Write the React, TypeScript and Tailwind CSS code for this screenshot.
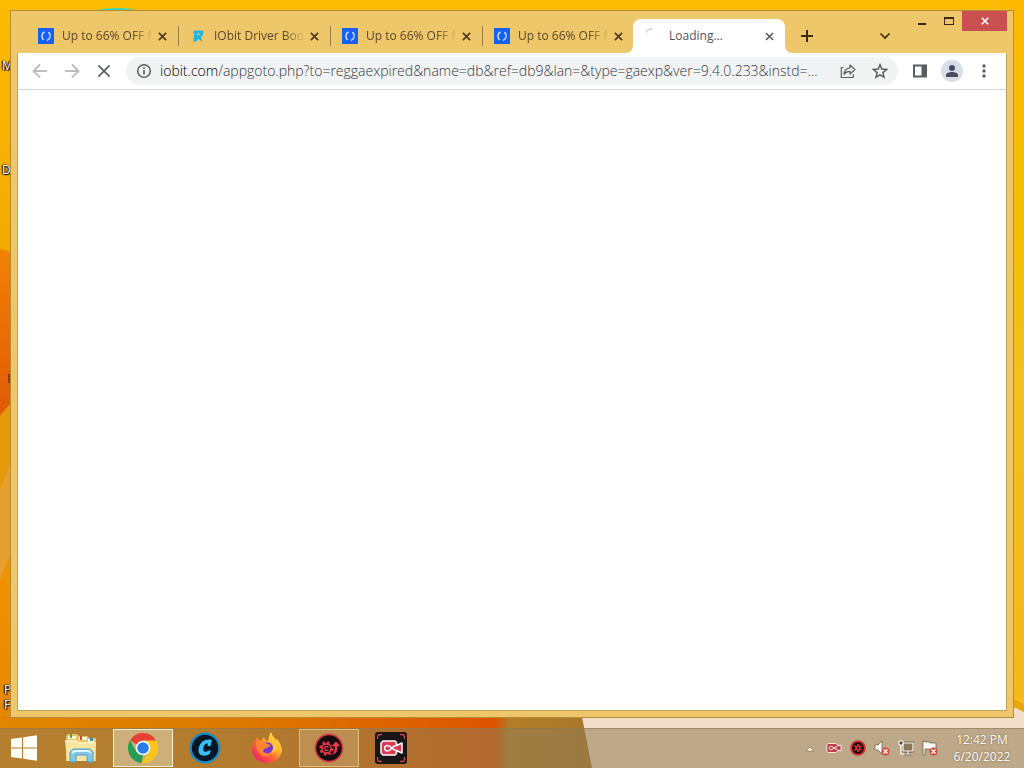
import React, { useState } from "react";

type TabData = { id: number; title: string; icon: "iobit" | "driver" };

const initialTabs: TabData[] = [
  { id: 1, title: "Up to 66% OFF f", icon: "iobit" },
  { id: 2, title: "IObit Driver Boo", icon: "driver" },
  { id: 3, title: "Up to 66% OFF f", icon: "iobit" },
  { id: 4, title: "Up to 66% OFF f", icon: "iobit" },
];

function Cross({ className }: { className: string }) {
  return (
    <svg viewBox="0 0 10 10" className={className} fill="none" stroke="currentColor" aria-hidden="true">
      <path d="M1 1l8 8M9 1l-8 8" />
    </svg>
  );
}

function Favicon({ kind }: { kind: TabData["icon"] }) {
  if (kind === "driver") {
    return (
      <svg viewBox="0 0 16 16" className="size-4 shrink-0" aria-hidden="true">
        <path d="M4 2.500h7.500c2 0 2.300 1.300 1.800 3-.5 1.900-1.200 2.600-2.300 3L12.300 14 8.500 11 6 13.500H3L4.500 5.500 3 4.500z" fill="#22b4e2" />
        <path d="M7.200 5.500h2.600l-.5 1.600H6.800z" fill="#efc76b" />
      </svg>
    );
  }
  return (
    <svg viewBox="0 0 16 16" className="size-4 shrink-0" aria-hidden="true">
      <path d="M0 0h16v16H0z" fill="#1660f5" />
      <path d="M6.500 3.800C3.500 5.500 3 9.500 5.500 12M9 12.500c3.300-1.500 4.300-5.500 1.500-8.500" fill="none" stroke="#d9f0ff" strokeWidth="1.400" />
    </svg>
  );
}

function Desktop() {
  return (
    <svg viewBox="0 0 1024 768" preserveAspectRatio="none" className="absolute inset-0 size-full" aria-hidden="true">
      <defs>
        <linearGradient id="sky" x1="0" y1="0" x2="0" y2="1">
          <stop offset="0" stopColor="#fdbb04" />
          <stop offset=".35" stopColor="#f3a800" />
          <stop offset=".8" stopColor="#ee9000" />
          <stop offset="1" stopColor="#e08400" />
        </linearGradient>
        <linearGradient id="rim" x1="0" y1="0" x2="0" y2="1">
          <stop offset="0" stopColor="#fcb900" />
          <stop offset=".3" stopColor="#f3c000" />
          <stop offset=".5" stopColor="#f2c022" />
          <stop offset="1" stopColor="#f5b51c" />
        </linearGradient>
        <linearGradient id="petal" x1="0" y1="0" x2="0" y2="1">
          <stop offset="0" stopColor="#f08205" />
          <stop offset="1" stopColor="#e05a05" />
        </linearGradient>
        <linearGradient id="floor" x1="0" y1="0" x2="1" y2="0">
          <stop offset="0" stopColor="#e08600" />
          <stop offset=".4" stopColor="#dc7a00" />
          <stop offset=".8" stopColor="#dd5800" />
          <stop offset=".835" stopColor="#dc5200" />
          <stop offset=".86" stopColor="#b27d28" />
          <stop offset="1" stopColor="#a8782c" />
        </linearGradient>
      </defs>
      <path d="M0 0h1024v768H0z" fill="url(#sky)" />
      <path d="M1000 0h24v768h-24z" fill="url(#rim)" />
      <path d="M0 249l12 3v150L0 416z" fill="url(#petal)" />
      <path d="M0 416l12-14v150L0 580z" fill="#e59a0c" />
      <path d="M0 490l12-30v90L0 580z" fill="#e7a030" />
      <path d="M8 374h3v9H8z" fill="#8e3c0c" />
      <path d="M0 717h592v51H0z" fill="url(#floor)" />
      <path d="M582 717h442v51H592z" fill="#f3dfc9" />
      <path d="M1012 706l12 6v20h-12z" fill="#f3dfc9" />
      <path d="M1012 699l12 5v8l-12-6z" fill="#eaa50c" />
      <ellipse cx="117" cy="11" rx="20" ry="3" fill="#43d4b0" />
    </svg>
  );
}

function DesktopLabels() {
  const labels = [
    { text: "M", pos: "left-0.5 top-[59px]" },
    { text: "D", pos: "left-0.5 top-[163px]" },
    { text: "P", pos: "left-1 top-[683px]" },
    { text: "F", pos: "left-1 top-[698px]" },
  ];
  return (
    <>
      {labels.map((l) => (
        <span key={l.text} className={`absolute text-xs leading-[14px] text-white [text-shadow:1px_1px_1px_#000,-1px_0_1px_#000,0_0_2px_#000] ${l.pos}`}>
          {l.text}
        </span>
      ))}
    </>
  );
}

function Tab({ tab, first, onClose }: { tab: TabData; first: boolean; onClose: () => void }) {
  return (
    <div className="flex h-[34px] w-38 min-w-0 items-center">
      {!first && <span className="h-5 w-px bg-[#9b7d42]" />}
      <button className={`flex min-w-0 flex-1 items-center gap-2 ${first ? "pl-3" : "pl-[11px]"}`}>
        <Favicon kind={tab.icon} />
        <span className="min-w-0 flex-1 overflow-hidden text-left whitespace-nowrap [mask-image:linear-gradient(to_right,#000_76%,transparent)]">
          {tab.title}
        </span>
      </button>
      <button aria-label={`Close ${tab.title}`} onClick={onClose} className="mr-2 flex size-4 shrink-0 items-center justify-center text-[#4b3414]">
        <Cross className="size-[9px] stroke-[1.8]" />
      </button>
    </div>
  );
}

function TabStrip() {
  const [tabs, setTabs] = useState(initialTabs);
  return (
    <div className="flex h-[42px] items-end text-xs text-[#5c4727]">
      <div className="flex min-w-0 pl-[9px]">
        {tabs.map((t, i) => (
          <Tab key={t.id} tab={t} first={i === 0} onClose={() => setTabs(tabs.filter((x) => x.id !== t.id))} />
        ))}
      </div>
      <svg viewBox="0 0 8 8" className="pointer-events-none -ml-[9px] size-2 shrink-0 text-white" aria-hidden="true">
        <path d="M8 0v8H0c5 0 8-3 8-8z" fill="currentColor" />
      </svg>
      <div className="flex h-[34px] w-38 shrink-0 items-center rounded-t-lg bg-white pr-2 pl-3 text-[#505358]">
        <svg viewBox="0 0 16 16" className="size-4 text-[#d3dbe5]" fill="none" stroke="currentColor" strokeWidth="2" aria-hidden="true">
          <path d="M1 4.500C2 2.500 4 1 7.500.8" />
        </svg>
        <button className="ml-2 flex-1 text-left">Loading...</button>
        <button aria-label="Close Loading" className="flex size-4 items-center justify-center">
          <Cross className="size-[9px] stroke-[1.6]" />
        </button>
      </div>
      <svg viewBox="0 0 8 8" className="size-2 shrink-0 text-white" aria-hidden="true">
        <path d="M0 0v8h8C3 8 0 5 0 0z" fill="currentColor" />
      </svg>
      <button aria-label="New tab" className="ml-1.5 flex h-[34px] w-4 shrink-0 items-center justify-center text-[#3c2a12]">
        <svg viewBox="0 0 12 12" className="size-3" stroke="currentColor" strokeWidth="2" aria-hidden="true">
          <path d="M6 0v12M0 6h12" />
        </svg>
      </button>
      <button aria-label="Search tabs" className="mr-[114px] ml-auto flex h-[34px] w-4 shrink-0 items-center justify-center text-[#3c2a12]">
        <svg viewBox="0 0 12 8" className="h-2 w-3" fill="none" stroke="currentColor" strokeWidth="1.700" aria-hidden="true">
          <path d="M1.500 1.500L6 6l4.500-4.500" />
        </svg>
      </button>
    </div>
  );
}

function WindowControls() {
  return (
    <div className="absolute top-0 right-1.5 flex text-[#3b2a14]">
      <button aria-label="Minimize" className="flex h-5 w-[27px] items-center justify-center">
        <svg viewBox="0 0 8 10" className="h-2.5 w-2" aria-hidden="true">
          <path d="M0 7h8v2H0z" fill="currentColor" />
        </svg>
      </button>
      <button aria-label="Maximize" className="flex h-5 w-[27px] items-center justify-center">
        <svg viewBox="0 0 10 8" className="h-2 w-2.5" aria-hidden="true">
          <path d="M0 0h10v8H0zM1 2v5h8V2z" fill="currentColor" fillRule="evenodd" />
        </svg>
      </button>
      <button aria-label="Close" className="flex h-5 w-[45px] items-center justify-center bg-[#c94f51] text-white">
        <Cross className="size-2 stroke-2" />
      </button>
    </div>
  );
}

function Toolbar() {
  return (
    <div className="flex h-[37px] items-center border-b border-[#d5d7d8] bg-white px-3.5 text-[#5a5e63]">
      <div className="flex shrink-0 gap-4">
        <button aria-label="Back" className="text-[#bbbdbf]">
          <svg viewBox="0 0 16 16" className="size-4" fill="none" stroke="currentColor" strokeWidth="1.800" aria-hidden="true">
            <path d="M8 1.500L1.500 8 8 14.500M1.500 8H15" />
          </svg>
        </button>
        <button aria-label="Forward" className="text-[#bbbdbf]">
          <svg viewBox="0 0 16 16" className="size-4" fill="none" stroke="currentColor" strokeWidth="1.800" aria-hidden="true">
            <path d="M8 1.500L14.500 8 8 14.500M14.500 8H1" />
          </svg>
        </button>
        <button aria-label="Stop" className="flex size-4 items-center justify-center">
          <Cross className="size-3.5 stroke-[1.2]" />
        </button>
      </div>
      <div className="ml-3.5 flex h-7 min-w-0 flex-1 items-center rounded-full bg-[#f1f3f4] px-2.5">
        <button aria-label="Site information">
          <svg viewBox="0 0 16 16" className="size-4" fill="none" stroke="currentColor" strokeWidth="1.500" aria-hidden="true">
            <circle cx="8" cy="8" r="6.300" />
            <path d="M8 7v4.500M8 4.300v1.600" strokeWidth="1.700" />
          </svg>
        </button>
        <a href="#page" className="ml-2 min-w-0 flex-1 text-sm leading-5 font-light whitespace-nowrap text-[#35393e]">
          <span className="text-black">iobit.com</span>/appgoto.php?to=reggaexpired&amp;name=db&amp;ref=db9&amp;lan=&amp;type=gaexp&amp;ver=9.4.0.233&amp;instd=...
        </a>
        <button aria-label="Share" className="ml-3">
          <svg viewBox="0 0 16 16" className="size-4" fill="none" stroke="currentColor" strokeWidth="1.200" strokeLinejoin="round" aria-hidden="true">
            <path d="M3.500 4.500H1.300v10h12V11M10 2l5 4.500L10 11V8.300c-3 0-4.500.7-6 3 .3-3.600 2.200-6 6-6.500z" />
          </svg>
        </button>
        <button aria-label="Bookmark" className="ml-4">
          <svg viewBox="0 0 16 16" className="size-4" fill="none" stroke="currentColor" strokeWidth="1.500" aria-hidden="true">
            <path d="M8 1.800l1.800 4.300 4.700.4-3.600 3.100 1.100 4.600L8 11.800l-4 2.400 1.100-4.600-3.600-3.100 4.700-.4z" />
          </svg>
        </button>
      </div>
      <div className="ml-3.5 flex shrink-0 items-center gap-[13px]">
        <button aria-label="Side panel">
          <svg viewBox="0 0 16 16" className="size-4" aria-hidden="true">
            <path d="M1 1.500h14v13H1zM3 3.500v9h6.500v-9z" fill="currentColor" fillRule="evenodd" />
          </svg>
        </button>
        <button aria-label="Profile">
          <svg viewBox="0 0 22 22" className="size-[22px]" aria-hidden="true">
            <circle cx="11" cy="11" r="11" fill="#d9dde7" />
            <circle cx="11" cy="8" r="3" fill="#474d5d" />
            <path d="M5 17v-2c0-2 3-3 6-3s6 1 6 3v2z" fill="#474d5d" />
          </svg>
        </button>
        <button aria-label="Menu">
          <svg viewBox="0 0 16 16" className="size-4" fill="currentColor" aria-hidden="true">
            <circle cx="8" cy="3" r="1.700" />
            <circle cx="8" cy="8" r="1.700" />
            <circle cx="8" cy="13" r="1.700" />
          </svg>
        </button>
      </div>
    </div>
  );
}

function WindowsLogo() {
  return (
    <svg viewBox="0 0 28 28" className="size-7" fill="#fffdf5" aria-hidden="true">
      <path d="M1 5l11-1.500v10H1zM13 3.300L27 1.300v12.200H13zM1 14.500h11v10L1 23zM13 14.500h14v12.200l-14-2z" />
    </svg>
  );
}

function FolderIcon() {
  return (
    <svg viewBox="0 0 34 32" className="h-8 w-[34px]" aria-hidden="true">
      <path d="M2 4l2-2h9l2 2h8l2 2h7v23H2z" fill="#e5c468" />
      <path d="M4 4h8v3H4zM15 5h8v3h-8zM24 7h6v3h-6z" fill="#fff7d5" />
      <path d="M6 2h2v4H6z" fill="#44a85c" />
      <path d="M16 4h2v4h-2z" fill="#cb4e32" />
      <path d="M26 6h3v3h-3z" fill="#3987b8" />
      <path d="M1 8h11l3 2h17l-1 19H3z" fill="#f8e5a0" />
      <path d="M1 9h11l3 2h17" fill="none" stroke="#fff7ce" />
      <path d="M6 30V20l3-3h17l3 3v10h-6v-7H12v7z" fill="#87c5e6" stroke="#4a9fc8" />
      <path d="M8 21l2-2h15l2 2" fill="none" stroke="#e0f5ff" strokeWidth="2" />
    </svg>
  );
}

function ChromeIcon() {
  return (
    <svg viewBox="0 0 30 30" className="size-[30px]" aria-hidden="true">
      <path d="M15 15L2 7.500A15 15 0 0 1 28 7.500z" fill="#e64335" />
      <path d="M2 7.500l6.500 11.250L15 22l-1.500 8A15 15 0 0 1 2 7.500z" fill="#269d50" />
      <path d="M15 7.500h13A15 15 0 0 1 13.500 30l8-11.250z" fill="#fbc51b" />
      <circle cx="15" cy="15" r="7.300" fill="#fff" />
      <circle cx="15" cy="15" r="5.800" fill="#287de9" />
    </svg>
  );
}

function CareIcon() {
  return (
    <svg viewBox="0 0 32 32" className="size-8" aria-hidden="true">
      <circle cx="16" cy="16" r="14.300" fill="#071626" stroke="#168bc7" strokeWidth="2.200" />
      <path d="M23 8l-1.600 6.300-3-.3.600-2.500c-2.800-.2-4.200 1.600-4.700 4.800-.4 3 .7 4.100 3.500 3.300l4-1.600-1.200 4.300C14.800 25 9.200 23.800 9.500 18 9.900 11.500 15 6 23 8z" fill="#35c0f5" />
    </svg>
  );
}

function FirefoxIcon() {
  return (
    <svg viewBox="0 0 32 32" className="size-8" aria-hidden="true">
      <defs>
        <linearGradient id="fox" x1=".9" y1=".1" x2=".2" y2=".9">
          <stop offset="0" stopColor="#ffe449" />
          <stop offset=".35" stopColor="#ffb72a" />
          <stop offset=".65" stopColor="#ff6538" />
          <stop offset="1" stopColor="#ec285f" />
        </linearGradient>
      </defs>
      <path d="M20 0c1 4 4 6 5 8l1-1c3 4 5 8 5 12-2 8-8 12-15 12C7 31 1 25 1 17c0-4 2-7 4-10l1-2 2 4 3-1 2-3c0 2 2 4 4 4 1-3 1-6 3-9z" fill="url(#fox)" />
      <circle cx="16" cy="16.500" r="6.300" fill="#733ad1" />
      <path d="M5 10c4-3 8-1 11 2l4 1-4 3c-2 0-3 1-4 3 2 3 6 3 9 1-2 5-8 6-12 2-3-3-4-7-4-12z" fill="#ff8430" />
      <path d="M17 9c4 0 6 4 5 8-1 2-2 3-3 4 8 0 10-8 4-12z" fill="#ffc43a" opacity=".9" />
    </svg>
  );
}

function BoosterIcon() {
  return (
    <svg viewBox="0 0 30 30" className="size-[30px]" aria-hidden="true">
      <circle cx="15" cy="15" r="13.600" fill="#160c10" stroke="#dc3945" strokeWidth="1.600" />
      <circle cx="12.500" cy="15.500" r="4.600" fill="none" stroke="#f23949" strokeWidth="1.600" />
      <circle cx="12.500" cy="15.500" r="6.200" fill="none" stroke="#f23949" strokeWidth="2" strokeDasharray="2.430 2.430" />
      <path d="M14.300 14.300a2 2 0 1 0 0 2.400" fill="none" stroke="#f23949" strokeWidth="1.400" />
      <path d="M16 22.500c4-2 4.500-5 4.300-9H17l5-5.500 5 5.500h-3.200c.2 5-1.800 8.500-7.800 9z" fill="#f23949" stroke="#160c10" strokeWidth=".8" />
    </svg>
  );
}

function RecorderIcon() {
  return (
    <svg viewBox="0 0 32 32" className="size-8" aria-hidden="true">
      <rect width="32" height="32" rx="3" fill="#181418" />
      <path d="M2.500 7V5A2.500 2.500 0 0 1 5 2.500h2M25 2.500h2A2.500 2.500 0 0 1 29.500 5v2M2.500 25v2A2.500 2.500 0 0 0 5 29.500h2M25 29.500h2a2.500 2.500 0 0 0 2.500-2.500v-2" fill="none" stroke="#c74557" strokeWidth="1.300" />
      <path d="M8 9h12l1.500 1.500v3L27 11v10l-5.500-2.500v3L20 23H8l-2-2V11z" fill="#db3852" stroke="#fff" strokeWidth="1.500" strokeLinejoin="round" />
      <path d="M21.500 13.500c-5 0-5 5.500-9 5.500-3.800 0-3.800-5.500 0-5.500s4 4.500 9 5" fill="none" stroke="#fff" strokeWidth="1.500" />
    </svg>
  );
}

function Tray() {
  return (
    <div className="ml-auto flex h-full shrink-0 items-center gap-2">
      <button aria-label="Show hidden icons">
        <svg viewBox="0 0 16 16" className="size-4" aria-hidden="true"><path d="M4 11l4-4 4 4z" fill="#fff8e8" stroke="#756344" strokeWidth=".6" /></svg>
      </button>
      <button aria-label="Screen recorder">
        <svg viewBox="0 0 16 16" className="size-4" aria-hidden="true">
          <path d="M2 3.500h8l1.500 1.500v1L15 5v6l-3.500-1v1L10 12.500H2L.8 11V5z" fill="#bd3e47" stroke="#fbe3dc" />
          <path d="M11 7C7 7 7.500 9.800 5 9.800S2.500 6.500 5 6.500s2.500 2.500 6 3" fill="none" stroke="#fff" />
        </svg>
      </button>
      <button aria-label="Driver booster">
        <svg viewBox="0 0 16 16" className="size-4" aria-hidden="true">
          <circle cx="8" cy="8" r="6.900" fill="#250b0c" stroke="#d8333a" strokeWidth="1.900" />
          <path d="M8 4v8M4.500 6l7 4M11.500 6l-7 4" stroke="#df373c" strokeWidth="1.500" />
          <circle cx="8" cy="8" r="1.700" fill="#250b0c" stroke="#df373c" />
        </svg>
      </button>
      <button aria-label="Volume muted">
        <svg viewBox="0 0 16 16" className="size-4" aria-hidden="true">
          <path d="M1 5h3l4-4v13l-4-4H1z" fill="#fff" stroke="#66563c" strokeWidth=".7" />
          <circle cx="11.500" cy="11.500" r="4" fill="#d6493c" />
          <path d="M9.500 9.500l4 4M13.500 9.500l-4 4" stroke="#fff" strokeWidth="1.300" />
        </svg>
      </button>
      <button aria-label="Network">
        <svg viewBox="0 0 16 16" className="size-4" fill="none" aria-hidden="true">
          <path d="M5 3h10v8H5zM10 11v3M6 14h8" stroke="#5c4d36" strokeWidth="2.600" />
          <path d="M5 3h10v8H5z" fill="#8a7a58" />
          <path d="M5 3h10v8H5zM10 11v3M6 14h8M3 5v9h4" stroke="#fff" strokeWidth="1.200" />
          <path d="M1 1h4v4H1z" fill="#5c4d36" stroke="#fff" />
        </svg>
      </button>
      <button aria-label="Action center">
        <svg viewBox="0 0 16 16" className="size-4" aria-hidden="true">
          <path d="M1 1h2v1h5v1h6v7H8V9H3v6H1z" fill="#fff" stroke="#5c4d36" strokeWidth=".7" />
          <circle cx="11.500" cy="11.500" r="4" fill="#d6493c" />
          <path d="M9.500 9.500l4 4M13.500 9.500l-4 4" stroke="#fff" strokeWidth="1.300" />
        </svg>
      </button>
      <time className="mr-3.5 ml-2 w-14 text-center text-xs leading-[17px] text-white [text-shadow:0_0_2px_#6b5535]">
        <span className="-mx-2 block">12:42 PM</span>
        <span className="-mx-2 block">6/20/2022</span>
      </time>
    </div>
  );
}

function Taskbar() {
  return (
    <footer className="relative flex h-10 shrink-0 items-center border-t border-[#8d7951]/60 bg-[#8f7b55]/55 pb-px">
      <button aria-label="Start" className="flex h-full w-12 items-center justify-center"><WindowsLogo /></button>
      <nav aria-label="Pinned apps" className="flex h-full items-center gap-0.5 pl-[3px]">
        <button aria-label="File Explorer" className="flex h-full w-[60px] items-center justify-center"><FolderIcon /></button>
        <button aria-label="Google Chrome" className="flex h-[38px] w-[60px] items-center justify-center border border-[#fff2cf] bg-[#d8c49d]/70"><ChromeIcon /></button>
        <button aria-label="System care" className="flex h-full w-[60px] items-center justify-center"><CareIcon /></button>
        <button aria-label="Firefox" className="flex h-full w-[60px] items-center justify-center"><FirefoxIcon /></button>
        <button aria-label="Driver Booster" className="flex h-[38px] w-[60px] items-center justify-center border border-[#dfbe7d] bg-[#c4a069]/60"><BoosterIcon /></button>
        <button aria-label="Recorder" className="flex h-full w-[60px] items-center justify-center"><RecorderIcon /></button>
      </nav>
      <Tray />
    </footer>
  );
}

export default function App() {
  return (
    <div className="relative flex h-screen flex-col overflow-hidden bg-[#f6aa00] font-['Open_Sans','Noto_Sans',sans-serif]">
      <Desktop />
      <DesktopLabels />
      <div className="relative flex min-h-0 flex-1 flex-col px-2.5 pt-2.5 pb-2.5">
        <section aria-label="Browser" className="relative flex min-h-0 flex-1 flex-col border border-[#b58b37] bg-[#efc76b] px-1.5 pb-1.5">
          <WindowControls />
          <TabStrip />
          <div className="flex min-h-0 flex-1 flex-col border border-t-0 border-[#c5a356] bg-white">
            <Toolbar />
            <main id="page" className="flex-1 bg-white" />
          </div>
        </section>
      </div>
      <Taskbar />
    </div>
  );
}
